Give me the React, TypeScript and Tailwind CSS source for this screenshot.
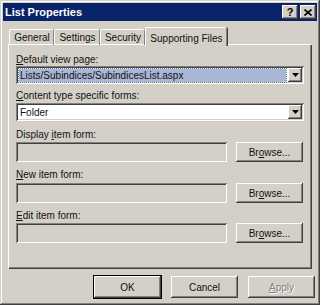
import type { ReactNode } from "react";

const font = "font-['Tahoma','Liberation_Sans',sans-serif]";

const raised =
  "shadow-[inset_-1px_-1px_#404040,inset_1px_1px_#ffffff,inset_-2px_-2px_#808080,inset_2px_2px_#d4d0c8]";
const sunken =
  "shadow-[inset_1px_1px_#808080,inset_-1px_-1px_#ffffff,inset_2px_2px_#404040,inset_-2px_-2px_#d4d0c8]";

function Label({ children, className = "" }: { children: ReactNode; className?: string }) {
  return <div className={`h-[13px] leading-[13px] text-[10px] text-[#111] ${className}`}>{children}</div>;
}

function Arrow() {
  return (
    <svg width="7" height="4" viewBox="0 0 7 4">
      <path d="M0 0h7L3.5 4z" fill="#000" />
    </svg>
  );
}

function Combo({ value, selected }: { value: string; selected?: boolean }) {
  return (
    <div className={`relative h-[18px] w-[288px] bg-white ${sunken} flex items-center p-[2px]`}>
      <div
        className={`h-[13px] leading-[13px] w-[267px] ml-[1px] pl-[1px] text-[10px] text-[#111] ${
          selected ? "bg-[#a9b6d5] outline outline-1 outline-dotted outline-[#6b7898]" : ""
        }`}
      >
        {value}
      </div>
      <div className={`ml-auto w-[14px] h-[14px] bg-[#d4d0c8] ${raised} flex items-center justify-center`}>
        <Arrow />
      </div>
    </div>
  );
}

function Button({
  children,
  width = "w-[67px]",
  height = "h-[20px]",
  isDefault,
  disabled,
}: {
  children: ReactNode;
  width?: string;
  height?: string;
  isDefault?: boolean;
  disabled?: boolean;
}) {
  return (
    <div
      className={`${width} ${height} bg-[#d4d0c8] ${raised} flex items-center justify-center text-[10px] ${
        isDefault ? "outline outline-1 outline-black" : ""
      } ${disabled ? "text-[#808080] [text-shadow:1px_1px_#ffffff]" : "text-[#111]"}`}
    >
      {children}
    </div>
  );
}

function FormRow({ className = "" }: { className?: string }) {
  return (
    <div className={`flex ${className}`}>
      <div className={`w-[211px] h-[20px] bg-[#d4d0c8] ${sunken}`} />
      <div className="ml-[9px]">
        <Button>
          Br<span className="underline">o</span>wse...
        </Button>
      </div>
    </div>
  );
}

function Tab({ label, width, active }: { label: string; width: string; active?: boolean }) {
  return (
    <div
      className={`${width} ${
        active ? "h-[19px] z-10 -mb-[1px] bg-[#d4d0c8] items-start pt-[3px]" : "h-[16px] items-center"
      } flex justify-center text-[10px] text-[#111] rounded-t-[2px] border-t border-l border-white shadow-[inset_-1px_0_#808080,1px_0_#404040]`}
    >
      {label}
    </div>
  );
}

export default function App() {
  return (
    <div
      className={`${font} w-[320px] h-[305px] bg-[#d4d0c8] p-[3px] flex flex-col shadow-[inset_-1px_-1px_#404040,inset_1px_1px_#d4d0c8,inset_-2px_-2px_#808080,inset_2px_2px_#ffffff]`}
    >
      {/* Title bar */}
      <div className="h-[18px] bg-[#0a246a] flex items-center pl-[2px] pr-[1px]">
        <span className="text-white font-bold text-[11px] leading-[13px]">List Properties</span>
        <div className="ml-auto flex gap-[2px]">
          <div className={`w-[16px] h-[14px] bg-[#d4d0c8] ${raised} flex items-center justify-center text-[11px] font-bold text-black leading-none`}>
            ?
          </div>
          <div className={`w-[16px] h-[14px] bg-[#d4d0c8] ${raised} flex items-center justify-center`}>
            <svg width="8" height="7" viewBox="0 0 8 7">
              <path d="M0.5 0.5 L7.5 6.5 M7.5 0.5 L0.5 6.5" stroke="#000" strokeWidth="1.6" />
            </svg>
          </div>
        </div>
      </div>

      {/* Tabs */}
      <div className="mt-[5px] ml-[6px] h-[19px] flex items-end relative -mb-[1px]">
        <Tab label="General" width="w-[45px]" />
        <Tab label="Settings" width="w-[46px]" />
        <Tab label="Security" width="w-[45px]" />
        <Tab label="Supporting Files" width="w-[82px]" active />
      </div>

      {/* Panel */}
      <div className="ml-[5px] mr-[6px] h-[224px] border-t border-l border-white shadow-[inset_-1px_-1px_#808080,1px_1px_#404040] px-[7px] pt-[8px] flex flex-col">
        <Label>
          <span className="underline">D</span>efault view page:
        </Label>
        <Combo value="Lists/Subindices/SubindicesList.aspx" selected />
        <Label className="mt-[5px]">
          <span className="underline">C</span>ontent type specific forms:
        </Label>
        <div className="mt-[1px]">
          <Combo value="Folder" />
        </div>
        <Label className="mt-[7px]">
          Display <span className="underline">i</span>tem form:
        </Label>
        <FormRow className="mt-[1px]" />
        <Label className="mt-[6px]">
          <span className="underline">N</span>ew item form:
        </Label>
        <FormRow className="mt-[2px]" />
        <Label className="mt-[6px]">
          <span className="underline">E</span>dit item form:
        </Label>
        <FormRow className="mt-[1px]" />
      </div>

      {/* Bottom buttons */}
      <div className="mt-[8px] flex justify-end gap-[10px] pr-[2px]">
        <Button height="h-[22px]" isDefault>
          OK
        </Button>
        <Button height="h-[22px]">Cancel</Button>
        <Button height="h-[22px]" disabled>
          <span className="underline">A</span>pply
        </Button>
      </div>
    </div>
  );
}
